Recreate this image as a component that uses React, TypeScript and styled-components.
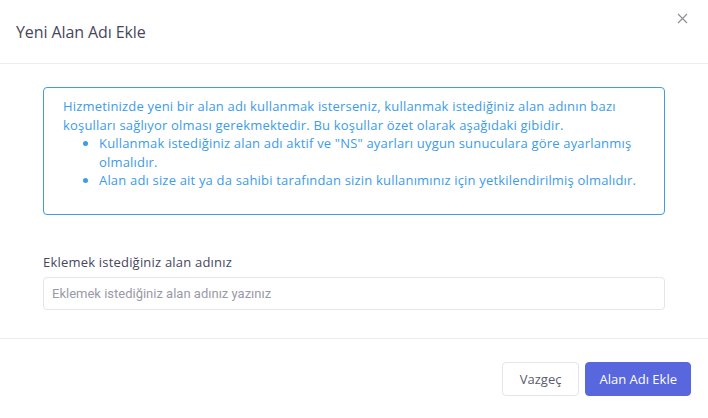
import React from "react";
import styled, { createGlobalStyle } from "styled-components";

const GlobalStyle = createGlobalStyle`
  html, body {
    margin: 0;
    padding: 0;
    background: #fff;
  }
  body {
    font-family: "Open Sans", "DejaVu Sans", sans-serif;
    color: #48465b;
  }
  * {
    box-sizing: border-box;
  }
`;

const Modal = styled.div`
  width: 708px;
  height: 418px;
  display: flex;
  flex-direction: column;
  background: #fff;
`;

const Header = styled.div`
  height: 64px;
  display: flex;
  align-items: center;
  justify-content: space-between;
  padding: 0 16px;
  border-bottom: 1px solid #ebedf2;
`;

const Title = styled.h5`
  margin: 0;
  font-size: 16px;
  font-weight: 400;
  color: #48465b;
  letter-spacing: -0.1px;
`;

const CloseButton = styled.button`
  align-self: flex-start;
  margin-top: 10px;
  margin-right: 2px;
  width: 16px;
  height: 16px;
  padding: 0;
  border: 0;
  background: none;
  cursor: pointer;
  display: flex;
  align-items: center;
  justify-content: center;
`;

const Body = styled.div`
  flex: 1;
  padding: 23px 43px 0 43px;
  border-bottom: 1px solid #ebedf2;
`;

const Alert = styled.div`
  border: 1px solid #3d9be9;
  border-radius: 4px;
  padding: 9px 20px 24px 19px;
  color: #3d9be9;
  font-size: 13px;
  line-height: 18.5px;
  letter-spacing: 0.18px;
`;

const AlertList = styled.ul`
  margin: 0;
  padding-left: 36px;
`;

const Field = styled.div`
  margin-top: 38px;
  display: flex;
  flex-direction: column;
  gap: 6px;
`;

const Label = styled.label`
  font-size: 13px;
  color: #48465b;
  letter-spacing: 0.2px;
`;

const Input = styled.input`
  height: 33px;
  border: 1px solid #e2e5ec;
  border-radius: 4px;
  padding: 0 8px;
  font-family: Roboto, sans-serif;
  font-size: 13px;
  color: #495057;
  outline: none;
  &::placeholder {
    color: #9a9aa6;
  }
`;

const Footer = styled.div`
  height: 79px;
  display: flex;
  align-items: center;
  justify-content: flex-end;
  gap: 6px;
  padding: 0 17px 0 0;
`;

const Button = styled.button<{ primary?: boolean }>`
  height: 34px;
  padding: 0 ${({ primary }) => (primary ? "13px" : "17px")};
  border-radius: 4px;
  font-family: "Open Sans", "DejaVu Sans", sans-serif;
  font-size: 13px;
  font-weight: ${({ primary }) => (primary ? 500 : 400)};
  cursor: pointer;
  border: 1px solid ${({ primary }) => (primary ? "#5867dd" : "#e2e5ec")};
  background: ${({ primary }) => (primary ? "#5867dd" : "#fff")};
  color: ${({ primary }) => (primary ? "#fff" : "#595d6e")};
`;

const App: React.FC = () => {
  return (
    <>
      <GlobalStyle />
      <Modal>
        <Header>
          <Title>Yeni Alan Adı Ekle</Title>
          <CloseButton aria-label="Kapat">
            <svg width="11" height="11" viewBox="0 0 11 11">
              <path d="M1 1L10 10M10 1L1 10" stroke="#8c8c96" strokeWidth="1.1" />
            </svg>
          </CloseButton>
        </Header>
        <Body>
          <Alert>
            Hizmetinizde yeni bir alan adı kullanmak isterseniz, kullanmak istediğiniz alan adının bazı
            koşulları sağlıyor olması gerekmektedir. Bu koşullar özet olarak aşağıdaki gibidir.
            <AlertList>
              <li>Kullanmak istediğiniz alan adı aktif ve "NS" ayarları uygun sunuculara göre ayarlanmış olmalıdır.</li>
              <li>Alan adı size ait ya da sahibi tarafından sizin kullanımınız için yetkilendirilmiş olmalıdır.</li>
            </AlertList>
          </Alert>
          <Field>
            <Label>Eklemek istediğiniz alan adınız</Label>
            <Input placeholder="Eklemek istediğiniz alan adınız yazınız" />
          </Field>
        </Body>
        <Footer>
          <Button>Vazgeç</Button>
          <Button primary>Alan Adı Ekle</Button>
        </Footer>
      </Modal>
    </>
  );
};

export default App;
